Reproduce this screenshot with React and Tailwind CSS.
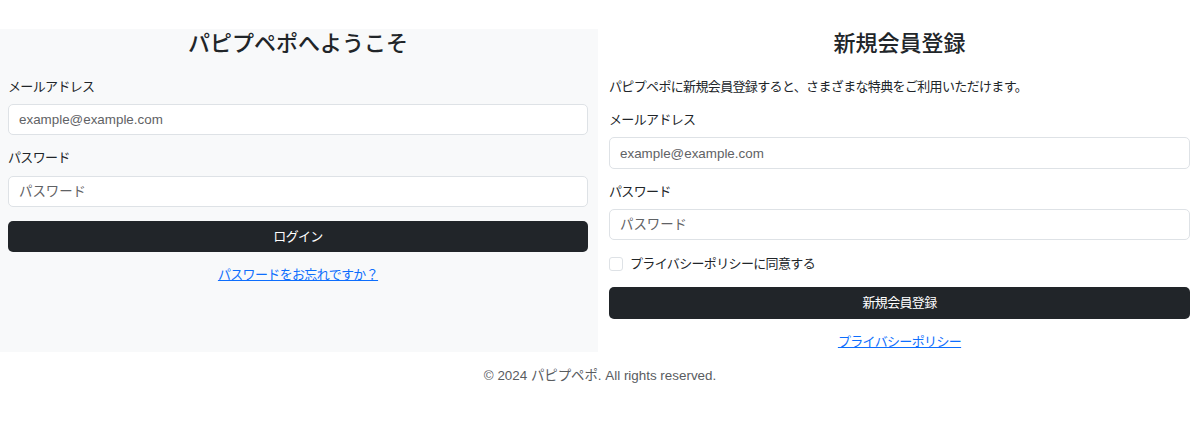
export default function App() {
  const font = {
    fontFamily: '"Liberation Sans", "Noto Sans CJK JP", sans-serif',
  };
  const inputCls =
    "block w-full px-[10px] text-[13.4px] bg-white border border-[#dee2e6] rounded-[5px] placeholder:text-[#5f6265] outline-none";
  return (
    <div className="min-h-screen bg-white text-[#212529] text-[13px] pt-[29px]" style={font}>
      <div className="flex items-stretch">
        <section className="w-[598px] bg-[#f8f9fa] pl-2 pr-[10px]">
          <h3 className="text-[22px] font-medium leading-[29px] text-center mb-[19px]">
            パピプペポへようこそ
          </h3>
          <form onSubmit={(e) => e.preventDefault()}>
            <label className="block leading-[20px] mb-[7px] tracking-[-0.05em]">メールアドレス</label>
            <input type="email" placeholder="example@example.com" className={`${inputCls} h-[31px]`} />
            <label className="block leading-[20px] mt-[13px] mb-[8px] tracking-[-0.05em]">パスワード</label>
            <input type="password" placeholder="パスワード" className={`${inputCls} h-[31px]`} />
            <button
              type="submit"
              className="block w-full h-[31px] mt-[14px] bg-[#212529] text-white rounded-[5px] tracking-[-0.05em]"
            >
              ログイン
            </button>
          </form>
          <div className="text-center leading-[20px] mt-[13px] tracking-[-0.05em]">
            <a href="#" className="text-[#0d6efd] underline">
              パスワードをお忘れですか？
            </a>
          </div>
        </section>

        <section className="flex-1 pl-[11px] pr-[10px]">
          <h3 className="text-[22px] font-medium leading-[29px] text-center mb-[19px]">
            新規会員登録
          </h3>
          <p className="leading-[20px] mb-[13px] tracking-[-0.05em]">
            パピプペポに新規会員登録すると、さまざまな特典をご利用いただけます。
          </p>
          <form onSubmit={(e) => e.preventDefault()}>
            <label className="block leading-[20px] mb-[7px] tracking-[-0.05em]">メールアドレス</label>
            <input type="email" placeholder="example@example.com" className={`${inputCls} h-[32px]`} />
            <label className="block leading-[20px] mt-[13px] mb-[7px] tracking-[-0.05em]">パスワード</label>
            <input type="password" placeholder="パスワード" className={`${inputCls} h-[31px]`} />
            <label className="flex items-center gap-[7px] leading-[20px] mt-[14px] tracking-[-0.05em]">
              <input
                type="checkbox"
                className="appearance-none w-[14px] h-[14px] border border-[#dee2e6] rounded-[3px] bg-white"
              />
              プライバシーポリシーに同意する
            </label>
            <button
              type="submit"
              className="block w-full h-[32px] mt-[13px] bg-[#212529] text-white rounded-[5px] tracking-[-0.05em]"
            >
              新規会員登録
            </button>
          </form>
          <div className="text-center leading-[20px] mt-[13px] tracking-[-0.05em]">
            <a href="#" className="text-[#0d6efd] underline">
              プライバシーポリシー
            </a>
          </div>
        </section>
      </div>
      <footer className="text-center text-[13.4px] text-[#595c5f] leading-[20px] pt-[14px]">
        © 2024 パピプペポ. All rights reserved.
      </footer>
    </div>
  );
}
